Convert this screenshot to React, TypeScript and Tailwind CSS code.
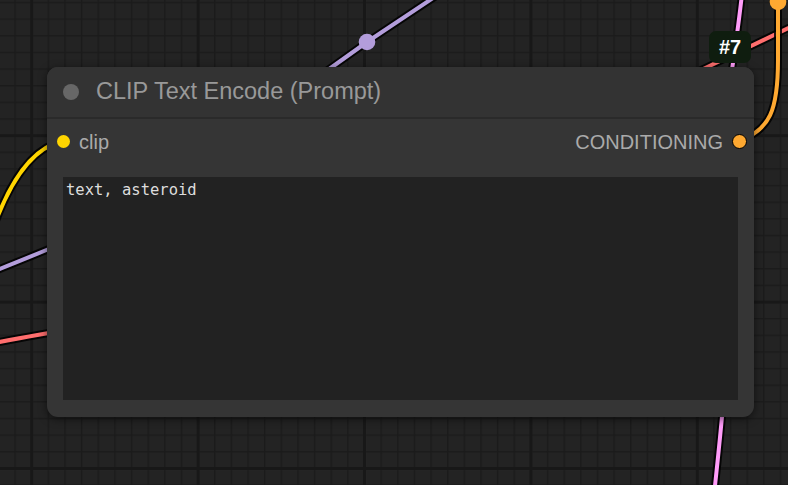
import React from "react";

type Wire = { d: string; color: string };

// wires run under the node, only the ends show
const wires: Wire[] = [
  { d: "M -8 272 Q 25 259 90 232", color: "#B39DDB" },
  { d: "M 290 97 L 367 42 L 445 -10", color: "#B39DDB" },
  { d: "M -6 343 Q 30 336 90 326", color: "#FF6E6E" },
  { d: "M 670 85 L 805 20", color: "#FF6E6E" },
  { d: "M 742 -6 Q 738 30 729 90", color: "#FF9CF9" },
  { d: "M 724 395 Q 720 440 714 495", color: "#FF9CF9" },
  { d: "M -8 232 C 8 185, 30 148, 63 141", color: "#FFD500" },
  { d: "M 739 141 C 770 130, 778 110, 778 60 L 778 0", color: "#FFA931" },
];

function Canvas() {
  return (
    <svg
      className="absolute inset-0 w-full h-full"
      width={788}
      height={485}
      viewBox="0 0 788 485"
    >
      <defs>
        <pattern
          id="minor"
          width="16.64"
          height="16.64"
          x="31"
          y="1.8"
          patternUnits="userSpaceOnUse"
        >
          <rect x="0" y="0" width="1.5" height="16.64" fill="#1b1b1b" />
          <rect x="0" y="0" width="16.64" height="1.5" fill="#1b1b1b" />
        </pattern>
        <pattern
          id="major"
          width="166.4"
          height="166.4"
          x="30.2"
          y="134.2"
          patternUnits="userSpaceOnUse"
        >
          <rect x="0" y="0" width="3" height="166.4" fill="#181818" />
          <rect x="0" y="0" width="166.4" height="3" fill="#181818" />
        </pattern>
      </defs>
      <rect width="788" height="485" fill="#232323" />
      <rect width="788" height="485" fill="url(#minor)" />
      <rect width="788" height="485" fill="url(#major)" />

      {wires.map((w, i) => (
        <g key={i} fill="none" strokeLinecap="round">
          <path d={w.d} stroke="#000" strokeOpacity="0.85" strokeWidth="8" />
          <path d={w.d} stroke={w.color} strokeWidth="4" />
        </g>
      ))}

      {/* link midpoints */}
      <circle cx="367" cy="42" r="8.3" fill="#B39DDB" />
      <circle cx="778" cy="2" r="8.3" fill="#FFA931" />
    </svg>
  );
}

function Node() {
  return (
    <div className="absolute left-[47px] top-[67px] w-[707px] h-[350px] rounded-[11px] bg-[#353535] shadow-[0_2px_8px_rgba(0,0,0,0.55)] flex flex-col font-['Liberation_Sans',Arial,sans-serif]">
      {/* Title */}
      <div className="h-[52px] shrink-0 flex items-center gap-[17px] pl-[16px] rounded-t-[11px] bg-[#333333] border-b-2 border-[#2a2a2a]">
        <div className="w-[16px] h-[16px] rounded-full bg-[#676767]" />
        <span className="text-[23.5px] leading-none text-[#999999]">
          CLIP Text Encode (Prompt)
        </span>
      </div>

      {/* Slots */}
      <div className="h-[44px] shrink-0 flex items-center justify-between pl-[10px] pr-[7px] pt-[1px]">
        <div className="flex items-center gap-[9px]">
          <div className="w-[13px] h-[13px] rounded-full bg-[#FFD500]" />
          <span className="text-[20px] leading-none text-[#aaaaaa]">clip</span>
        </div>
        <div className="flex items-center gap-[9px]">
          <span className="text-[20px] leading-none text-[#aaaaaa]">
            CONDITIONING
          </span>
          <div className="w-[15px] h-[15px] rounded-full bg-[#FFA931] border-[1.5px] border-black" />
        </div>
      </div>

      {/* Text widget */}
      <div className="mx-[16px] mt-[14px] h-[223px] bg-[#222222] px-[3px] pt-[4px] font-['DejaVu_Sans_Mono',monospace] text-[15.5px] leading-[18px] text-[#dddddd]">
        text, asteroid
      </div>
    </div>
  );
}

export default function App() {
  return (
    <div className="relative w-[788px] h-[485px] overflow-hidden bg-[#232323]">
      <Canvas />
      <Node />
      <div className="absolute left-[709px] top-[31px] w-[42px] h-[32px] rounded-[7px] bg-[#0f1d0f] flex items-center justify-center font-['Liberation_Sans',Arial,sans-serif] font-bold text-[20px] text-white">
        #7
      </div>
    </div>
  );
}
